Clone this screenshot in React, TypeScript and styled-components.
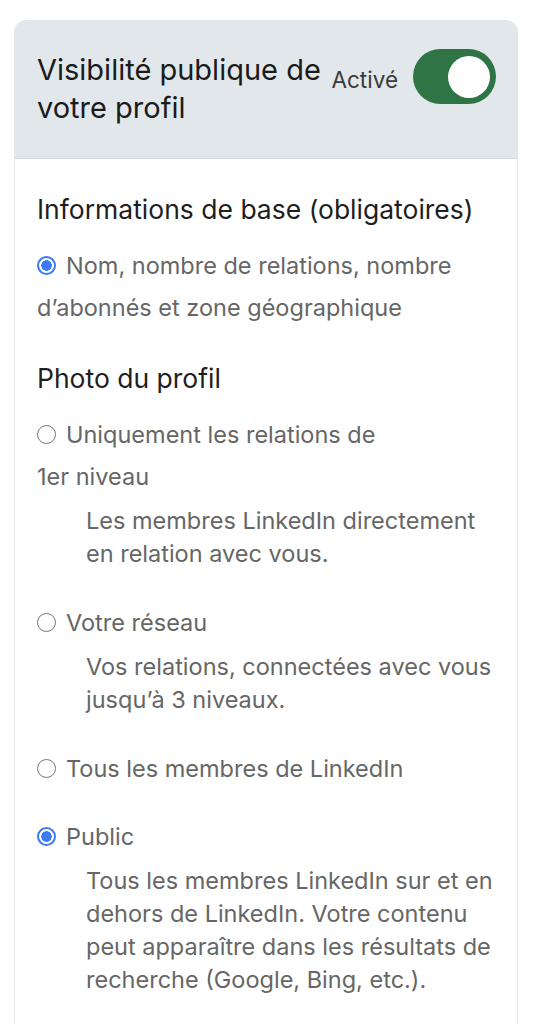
import styled, { createGlobalStyle } from "styled-components";

const GlobalStyle = createGlobalStyle`
    html, body {
        margin: 0;
        padding: 0;
        background: #ffffff;
        font-family: Inter, "Noto Sans", "Liberation Sans", sans-serif;
    }
`;

const Page = styled.div({
    padding: '20px 15px 0 14px',
})

const Card = styled.div({
    border: '1px solid #e4e6e8',
    borderBottom: 'none',
    borderRadius: '12px 12px 0 0',
    overflow: 'hidden',
    backgroundColor: '#ffffff',
})

const Header = styled.div({
    display: 'flex',
    alignItems: 'flex-start',
    gap: '3px',
    padding: '30px 21px 31px 22px',
    backgroundColor: '#e1e7ea',
    borderBottom: '1px solid #d3d8db',
})

const HeaderTitle = styled.h2({
    flex: 1,
    margin: 0,
    fontSize: '29px',
    lineHeight: '38px',
    fontWeight: 400,
    color: '#1b1b1b',
})

const Status = styled.div({
    display: 'flex',
    alignItems: 'center',
    gap: '15px',
    marginTop: '-2px',
})

const StatusLabel = styled.span({
    fontSize: '22.5px',
    color: '#3a3a3a',
    paddingTop: '6px',
})

interface ISwitchProps {
    on?: boolean
}

const Switch = styled.div<ISwitchProps>(({ on = true }: ISwitchProps) => ({
    width: '83px',
    height: '55px',
    borderRadius: '28px',
    backgroundColor: on ? '#2f7445' : '#b8bec2',
    display: 'flex',
    alignItems: 'center',
    justifyContent: on ? 'flex-end' : 'flex-start',
    padding: '0 6px',
    boxSizing: 'border-box',
}))

const Knob = styled.div({
    width: '42px',
    height: '42px',
    borderRadius: '50%',
    backgroundColor: '#ffffff',
})

const Body = styled.div({
    padding: '34px 22px 40px 22px',
})

const SectionTitle = styled.h3({
    margin: '0 0 20px 0',
    fontSize: '26.5px',
    lineHeight: '32px',
    fontWeight: 400,
    color: '#1e1e1e',
})

const Section = styled.div({
    marginBottom: '33px',
})

const Option = styled.div({
    display: 'flex',
    flexDirection: 'column',
    marginBottom: '26px',
})

const OptionLabel = styled.label({
    display: 'block',
    fontSize: '23.5px',
    lineHeight: '42px',
    color: '#666666',
    whiteSpace: 'nowrap',
})

interface IRadioProps {
    checked?: boolean
}

const Radio = styled.span<IRadioProps>(({ checked = false }: IRadioProps) => ({
    display: 'inline-block',
    boxSizing: 'border-box',
    width: '19px',
    height: '19px',
    borderRadius: '50%',
    marginRight: '10px',
    verticalAlign: '-1px',
    border: checked ? '2px solid #3b7cf4' : '1.5px solid #767676',
    background: checked ? 'radial-gradient(circle, #3b7cf4 0 5px, #ffffff 5.5px)' : '#ffffff',
}))

const Description = styled.p({
    margin: '6px 0 6px 49px',
    fontSize: '23.5px',
    lineHeight: '33px',
    color: '#666666',
    whiteSpace: 'nowrap',
})

interface IOptionItem {
    label: string[];
    checked?: boolean;
    description?: string[];
}

const photoOptions: IOptionItem[] = [
    {
        label: ['Uniquement les relations de', '1er niveau'],
        description: ['Les membres LinkedIn directement', 'en relation avec vous.'],
    },
    {
        label: ['Votre réseau'],
        description: ['Vos relations, connectées avec vous', 'jusqu’à 3 niveaux.'],
    },
    {
        label: ['Tous les membres de LinkedIn'],
    },
    {
        label: ['Public'],
        checked: true,
        description: [
            'Tous les membres LinkedIn sur et en',
            'dehors de LinkedIn. Votre contenu',
            'peut apparaître dans les résultats de',
            'recherche (Google, Bing, etc.).',
        ],
    },
]

const Lines = ({ lines }: { lines: string[] }) => <>
    {lines.map((line, i) => <span key={i}>{i > 0 && <br/>}{line}</span>)}
</>

const OptionRow = ({ label, checked, description }: IOptionItem) => {
    return <Option>
        <OptionLabel>
            <Radio checked={checked}/>
            <Lines lines={label}/>
        </OptionLabel>
        {description && <Description><Lines lines={description}/></Description>}
    </Option>
}

export default function App() {
    return <Page>
        <GlobalStyle/>
        <Card>
            <Header>
                <HeaderTitle>Visibilité publique de votre profil</HeaderTitle>
                <Status>
                    <StatusLabel>Activé</StatusLabel>
                    <Switch on><Knob/></Switch>
                </Status>
            </Header>
            <Body>
                <Section>
                    <SectionTitle>Informations de base (obligatoires)</SectionTitle>
                    <OptionLabel>
                        <Radio checked/>
                        <Lines lines={['Nom, nombre de relations, nombre', 'd’abonnés et zone géographique']}/>
                    </OptionLabel>
                </Section>
                <Section>
                    <SectionTitle>Photo du profil</SectionTitle>
                    {photoOptions.map((o, i) => <OptionRow key={i} {...o}/>)}
                </Section>
            </Body>
        </Card>
    </Page>
}
